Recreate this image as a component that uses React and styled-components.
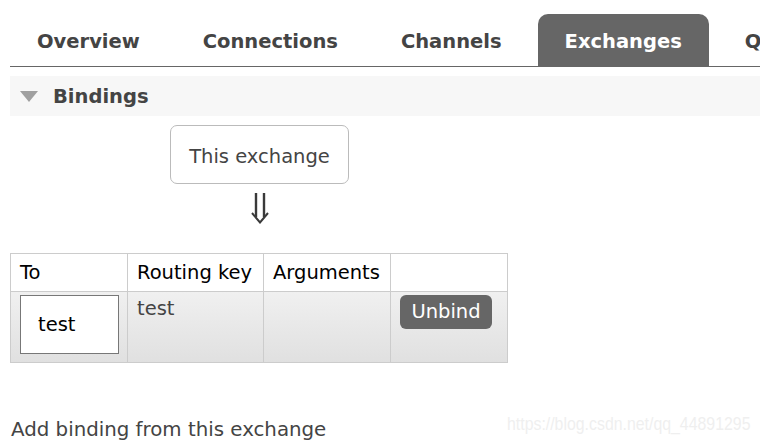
import React from 'react'
import styled, { createGlobalStyle } from 'styled-components'

const GlobalStyle = createGlobalStyle`
  html, body {
    margin: 0;
    padding: 0;
    background: #fff;
  }
  body {
    font-family: 'DejaVu Sans', Verdana, sans-serif;
    font-size: 19.5px;
    color: #444;
    overflow: hidden;
  }
`

const Page = styled.div`
  position: relative;
  width: 760px;
  height: 442px;
  padding-left: 10px;
  box-sizing: border-box;
`

const Tabs = styled.ul`
  display: flex;
  list-style: none;
  margin: 0;
  padding: 14px 0 0 0;
  border-bottom: 1px solid #666;
  white-space: nowrap;
  overflow: hidden;
`

const Tab = styled.li`
  flex: none;
  height: 52px;
  box-sizing: border-box;
  padding: 14px 27px 11px;
  margin-right: 9px;
  line-height: 27px;
  font-weight: bold;
  color: ${p => (p.active ? '#fff' : '#444')};
  background: ${p => (p.active ? '#666' : 'transparent')};
  border-radius: 10px 10px 0 0;
`

const SectionHead = styled.div`
  display: flex;
  align-items: center;
  gap: 15px;
  margin-top: 9px;
  height: 40px;
  padding: 0 10px;
  background: #f7f7f7;
  font-weight: bold;
  line-height: 27px;
  color: #444;
`

const Triangle = styled.span`
  width: 0;
  height: 0;
  border-left: 9px solid transparent;
  border-right: 9px solid transparent;
  border-top: 11px solid #a0a0a0;
`

const Diagram = styled.div`
  display: flex;
  flex-direction: column;
  align-items: center;
  width: 179px;
  margin: 9px 0 0 160px;
`

const SourceBox = styled.div`
  box-sizing: border-box;
  width: 179px;
  height: 59px;
  padding: 17px 0 0;
  text-align: center;
  line-height: 27px;
  border: 1px solid #bbb;
  border-radius: 7px;
  color: #444;
`

const Arrow = styled.div`
  height: 69px;
  box-sizing: border-box;
  padding: 9px 0 0 1px;
  svg { display: block; }
`

const Table = styled.table`
  border-collapse: collapse;
  table-layout: fixed;
  width: 497px;
`

const Th = styled.th`
  width: ${p => p.w}px;
  box-sizing: border-box;
  padding: 5px 9px;
  height: 37px;
  border: 1px solid #ccc;
  text-align: left;
  font-weight: normal;
  line-height: 27px;
  color: #000;
  white-space: nowrap;
`

const Row = styled.tr`
  background: linear-gradient(#f0f0f0, #e0e0e0);
`

const Td = styled.td`
  padding: 3px 9px 8px;
  border: 1px solid #ccc;
  vertical-align: top;
  line-height: 27px;
  color: #444;
`

const QueueBox = styled.div`
  box-sizing: border-box;
  width: 99px;
  height: 59px;
  padding: 0 17px;
  display: flex;
  align-items: center;
  background: #fff;
  border: 1px solid #777;
  color: #000;
`

const Button = styled.button`
  font: inherit;
  width: 92px;
  height: 34px;
  padding: 0;
  border: none;
  border-radius: 6px;
  background: #666;
  color: #fff;
  line-height: 34px;
`

const AddHeading = styled.h3`
  margin: 53px 0 0 1px;
  font-size: 19.8px;
  font-weight: normal;
  line-height: 27px;
  color: #444;
`

const Watermark = styled.div`
  position: absolute;
  left: 507px;
  top: 413px;
  font-family: 'Liberation Sans', Arial, sans-serif;
  font-size: 19px;
  color: #efefef;
  transform: scaleX(0.835);
  transform-origin: left top;
  white-space: nowrap;
`

const DownArrow = () => (
  <svg width="18" height="31" viewBox="0 0 18 31" fill="none" stroke="#3a3a3a" strokeWidth="2.4">
    <path d="M5 0 V24" />
    <path d="M13 0 V24" />
    <path d="M1 20 L9 29.5 L17 20" strokeWidth="2" />
  </svg>
)

const tabs = ['Overview', 'Connections', 'Channels', 'Exchanges', 'Queues']

export default function App() {
  return (
    <Page>
      <GlobalStyle />
      <Tabs>
        {tabs.map(t => (
          <Tab key={t} active={t === 'Exchanges'}>{t}</Tab>
        ))}
      </Tabs>
      <SectionHead>
        <Triangle />
        Bindings
      </SectionHead>
      <Diagram>
        <SourceBox>This exchange</SourceBox>
        <Arrow><DownArrow /></Arrow>
      </Diagram>
      <Table>
        <thead>
          <tr>
            <Th w={117}>To</Th>
            <Th w={136}>Routing key</Th>
            <Th w={127}>Arguments</Th>
            <Th w={117}></Th>
          </tr>
        </thead>
        <tbody>
          <Row>
            <Td><QueueBox>test</QueueBox></Td>
            <Td>test</Td>
            <Td></Td>
            <Td><Button>Unbind</Button></Td>
          </Row>
        </tbody>
      </Table>
      <AddHeading>Add binding from this exchange</AddHeading>
      <Watermark>https://blog.csdn.net/qq_44891295</Watermark>
    </Page>
  )
}
